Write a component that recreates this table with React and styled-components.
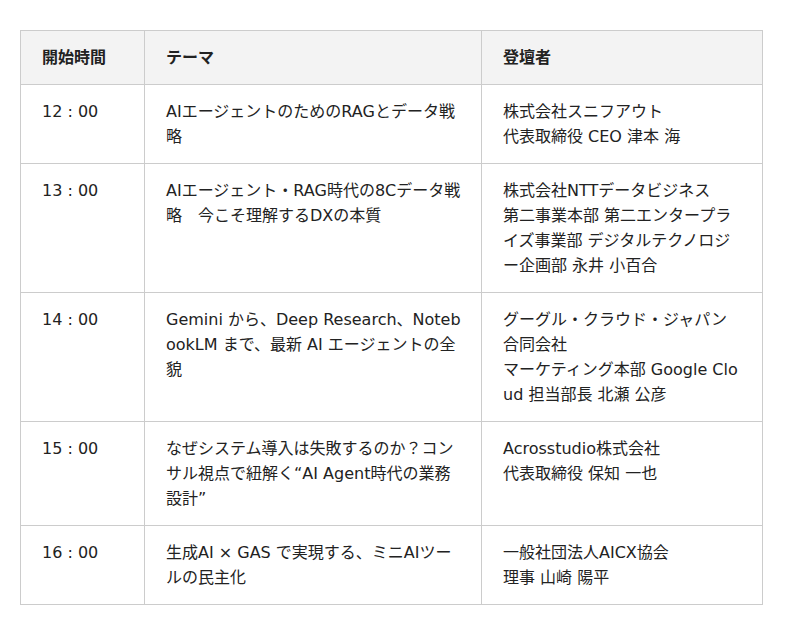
import React from "react";
import styled, { createGlobalStyle } from "styled-components";

const sessions = [
  {
    time: "12 : 00",
    theme: "AIエージェントのためのRAGとデータ戦略",
    speaker: ["株式会社スニフアウト", "代表取締役 CEO 津本 海"],
  },
  {
    time: "13 : 00",
    theme: "AIエージェント・RAG時代の8Cデータ戦略　今こそ理解するDXの本質",
    speaker: [
      "株式会社NTTデータビジネス",
      "第二事業本部 第二エンタープライズ事業部 デジタルテクノロジー企画部 永井 小百合",
    ],
  },
  {
    time: "14 : 00",
    theme: "Gemini から、Deep Research、NotebookLM まで、最新 AI エージェントの全貌",
    speaker: [
      "グーグル・クラウド・ジャパン",
      "合同会社",
      "マーケティング本部 Google Cloud 担当部長 北瀬 公彦",
    ],
  },
  {
    time: "15 : 00",
    theme: "なぜシステム導入は失敗するのか？コンサル視点で紐解く“AI Agent時代の業務設計”",
    speaker: ["Acrosstudio株式会社", "代表取締役 保知 一也"],
  },
  {
    time: "16 : 00",
    theme: "生成AI × GAS で実現する、ミニAIツールの民主化",
    speaker: ["一般社団法人AICX協会", "理事 山崎 陽平"],
  },
];

const GlobalStyle = createGlobalStyle`
  body {
    margin: 0;
    background: #ffffff;
    font-family: "DejaVu Sans", "Noto Sans CJK JP", sans-serif;
    color: #222222;
  }
`;

const Page = styled.div`
  padding: 30px 20px;
`;

const Table = styled.table`
  width: 742px;
  table-layout: fixed;
  border-collapse: collapse;
  font-size: 16px;
  line-height: 25px;
`;

const Col = styled.col`
  width: ${(p) => p.$w}px;
`;

const Head = styled.th`
  background: #f3f3f3;
  border: 1px solid #cccccc;
  padding: 14px 17px 14px 21px;
  text-align: left;
  font-weight: 700;
  vertical-align: top;
`;

const Cell = styled.td`
  border: 1px solid #cccccc;
  padding: 14px 17px 14px 21px;
  vertical-align: top;
  word-break: break-all;
`;

export default function App() {
  return (
    <Page>
      <GlobalStyle />
      <Table>
        <colgroup>
          <Col $w={124} />
          <Col $w={337} />
          <Col $w={281} />
        </colgroup>
        <thead>
          <tr>
            <Head>開始時間</Head>
            <Head>テーマ</Head>
            <Head>登壇者</Head>
          </tr>
        </thead>
        <tbody>
          {sessions.map((s) => (
            <tr key={s.time}>
              <Cell>{s.time}</Cell>
              <Cell>{s.theme}</Cell>
              <Cell>
                {s.speaker.map((line, i) => (
                  <React.Fragment key={i}>
                    {i > 0 && <br />}
                    {line}
                  </React.Fragment>
                ))}
              </Cell>
            </tr>
          ))}
        </tbody>
      </Table>
    </Page>
  );
}
